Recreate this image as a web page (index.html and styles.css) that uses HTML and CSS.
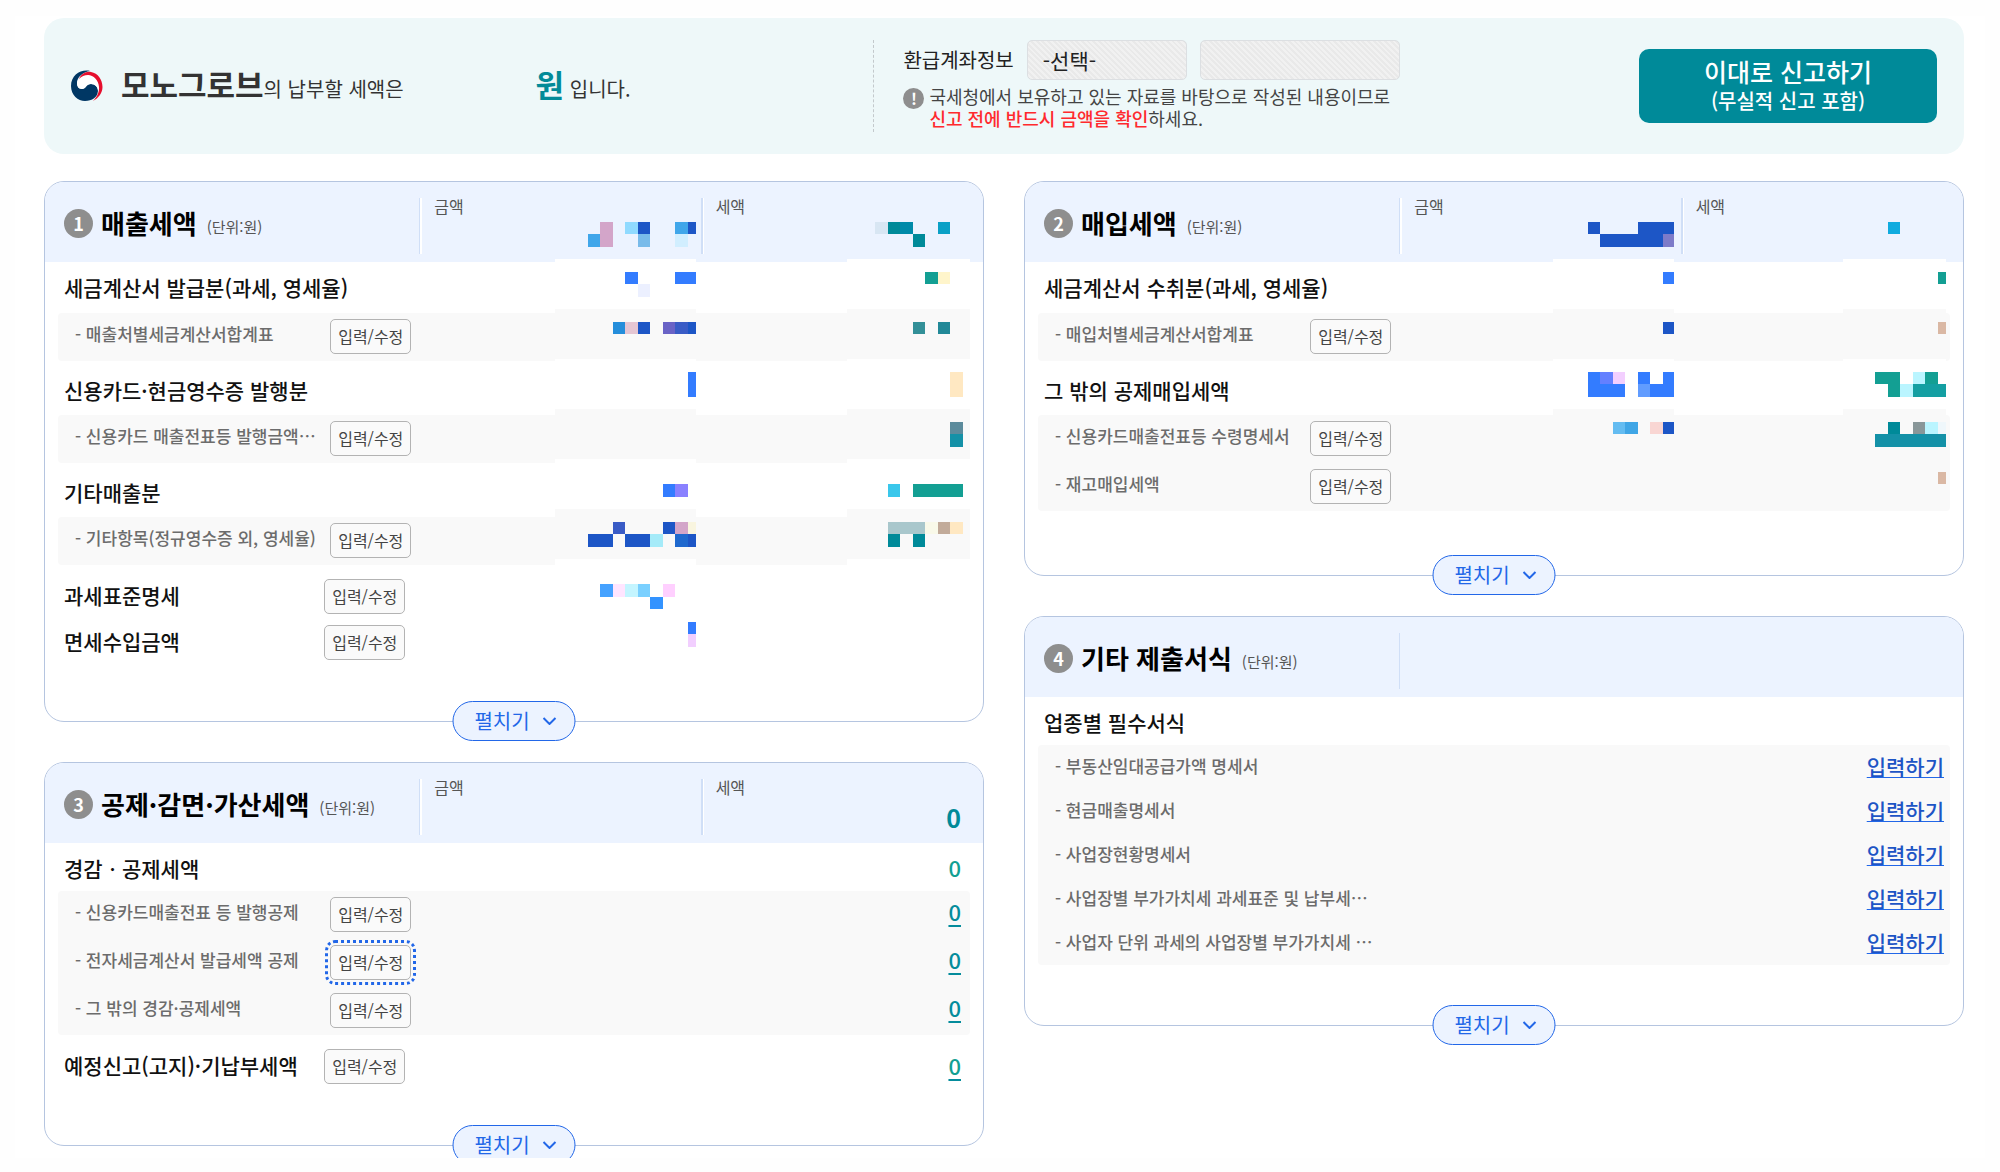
FILE: index.html
```html
<!DOCTYPE html>
<html lang="ko">
<head>
<meta charset="utf-8">
<meta name="viewport" content="width=device-width, initial-scale=1">
<title>부가가치세 신고</title>
<link rel="stylesheet" href="styles.css">
</head>
<body>
<main class="panel">
  <section class="banner">
    <div class="banner-sum">
      <svg class="logo" viewBox="0 0 32 32" aria-hidden="true">
        <path fill="#003764" d="M19 1C10-1 0 5 0 16c0 9 7 15 14 15 7 0 13-4 13-10 0-4-3-7-7-7-5 0-5 5-9 5-3.500 0-5-3-5-6C6 7 12 2 19 1z"/>
        <path fill="#fff" d="M8 9c2.500-3.500 6-4.500 9-4 6 .5 10.500 5 11 12 .3 3-.6 6-2 8 .7-1.300 1-2.600 1-4 0-4-3-7-7-7-5 0-5 5-9 5-3.500 0-5-3-5-6 0-1.500.8-2.800 2-4z"/>
        <path fill="#e60f2d" d="M8 9c2-5 7-8 12-7 7 1 11.500 8 11.500 15 0 6-4 11-9.500 14 4-4 6.500-9 6-14-.5-7-5.500-12-11-12-3.500 0-6.500 1.500-9 4z"/>
      </svg>
      <p class="sum-text"><strong class="corp">모노그로브</strong>의 납부할 세액은<span class="sum-amount"></span><strong class="won">원</strong> 입니다.</p>
    </div>
    <div class="refund">
      <div class="refund-row">
        <label for="bank">환급계좌정보</label>
        <select id="bank" class="field bank" disabled><option>-선택-</option></select>
        <input class="field account" type="text" aria-label="계좌번호" disabled>
      </div>
      <div class="notice">
        <span class="notice-icon">!</span>
        <p>국세청에서 보유하고 있는 자료를 바탕으로 작성된 내용이므로<br><em>신고 전에 반드시 금액을 확인</em>하세요.</p>
      </div>
    </div>
    <button class="submit" type="button"><span class="submit-main">이대로 신고하기</span><span class="submit-sub">(무실적 신고 포함)</span></button>
  </section>

  <div class="columns">
    <div class="column">
      <section class="card">
        <table>
          <thead>
            <tr>
              <th class="c-item"><div class="card-title"><span class="num">1</span><h2>매출세액</h2><span class="unit">(단위:원)</span></div></th>
              <th class="c-val split">금액
                <svg class="mosaic at-5" width="141" height="480" aria-hidden="true">
                  <path fill="#fff" d="M0 77h141v50H0zM0 177h141v50H0zM0 277h141v50H0zM0 377h141v10H0z"/>
                  <path fill="#f9f9f9" d="M0 127h141v50H0zM0 227h141v50H0zM0 327h141v50H0z"/>
                  <path fill="#40a6ea" d="M33 52h12v13H33zM120 40h13v12h-13z"/>
                  <path fill="#d3a5c9" d="M45 40h13v25H45zM120 340h13v12h-13z"/>
                  <path fill="#90daff" d="M70 40h13v12H70z"/>
                  <path fill="#79bbea" d="M83 52h12v13H83z"/>
                  <path fill="#d1eeff" d="M120 52h13v13h-13z"/>
                  <path fill="#1d56c6" d="M83 40h12v12H83zM133 40h8v12h-8zM83 140h12v12H83zM133 140h8v12h-8zM108 340h12v12h-12zM33 352h25v13H33zM70 352h25v13H70zM133 352h8v13h-8z"/>
                  <path fill="#337cff" d="M70 90h13v12H70zM120 90h21v12h-21zM133 190h8v25h-8zM108 302h12v13h-12zM133 440h8v12h-8z"/>
                  <path fill="#ecf0ff" d="M83 102h12v13H83z"/>
                  <path fill="#258edb" d="M58 140h12v12H58z"/>
                  <path fill="#e5c6d3" d="M70 140h13v12H70z"/>
                  <path fill="#6a63c6" d="M108 140h12v12h-12z"/>
                  <path fill="#3a5cc6" d="M120 140h13v12h-13zM58 340h12v12H58z"/>
                  <path fill="#8a81ff" d="M120 302h13v13h-13z"/>
                  <path fill="#f9f5df" d="M133 340h8v12h-8z"/>
                  <path fill="#a5ebf9" d="M95 352h13v13H95z"/>
                  <path fill="#1f69ce" d="M120 352h13v13h-13z"/>
                  <path fill="#45a2ff" d="M45 402h13v13H45z"/>
                  <path fill="#ffe5ff" d="M58 402h12v13H58z"/>
                  <path fill="#c4f5ff" d="M70 402h13v13H70z"/>
                  <path fill="#7ad0ff" d="M83 402h12v13H83z"/>
                  <path fill="#ffd0ff" d="M108 402h12v13h-12z"/>
                  <path fill="#3393ff" d="M95 415h13v12H95z"/>
                  <path fill="#f2cfff" d="M133 452h8v13h-8z"/>
                </svg>
              </th>
              <th class="c-val split wide">세액
                <svg class="mosaic at-13" width="123" height="387" aria-hidden="true">
                  <path fill="#fff" d="M0 77h123v50H0zM0 177h123v50H0zM0 277h123v50H0zM0 377h123v10H0z"/>
                  <path fill="#f9f9f9" d="M0 127h123v50H0zM0 227h123v50H0zM0 327h123v50H0z"/>
                  <path fill="#d8e6f3" d="M28 40h13v12H28z"/>
                  <path fill="#008a99" d="M41 40h12v12H41zM66 52h12v13H66zM41 352h12v13H41zM66 352h12v13H66z"/>
                  <path fill="#008aa9" d="M53 40h13v12H53z"/>
                  <path fill="#0aa0c6" d="M91 40h12v12H91z"/>
                  <path fill="#139f93" d="M78 90h13v12H78zM66 302h50v13H66z"/>
                  <path fill="#fff5cb" d="M91 90h12v12H91z"/>
                  <path fill="#339098" d="M66 140h12v12H66z"/>
                  <path fill="#228998" d="M91 140h12v12H91z"/>
                  <path fill="#ffe8c2" d="M103 190h13v25h-13zM103 340h13v12h-13z"/>
                  <path fill="#5c8b9c" d="M103 240h13v12h-13z"/>
                  <path fill="#1491a7" d="M103 252h13v13h-13z"/>
                  <path fill="#3ac7eb" d="M41 302h12v13H41z"/>
                  <path fill="#a9c7cc" d="M41 340h37v12H41z"/>
                  <path fill="#f9f9e9" d="M78 340h13v12H78z"/>
                  <path fill="#c2ab9a" d="M91 340h12v12H91z"/>
                </svg>
              </th>
            </tr>
          </thead>
          <tbody>
            <tr class="group tall"><td colspan="3">세금계산서 발급분(과세, 영세율)</td></tr>
            <tr class="sub only"><td><div class="line"><span class="name">- 매출처별세금계산서합계표</span><button class="edit" type="button">입력/수정</button></div></td><td></td><td></td></tr>
            <tr class="group next"><td colspan="3">신용카드·현금영수증 발행분</td></tr>
            <tr class="sub only"><td><div class="line"><span class="name">- 신용카드 매출전표등 발행금액⋯</span><button class="edit" type="button">입력/수정</button></div></td><td></td><td></td></tr>
            <tr class="group next"><td colspan="3">기타매출분</td></tr>
            <tr class="sub only"><td><div class="line"><span class="name">- 기타항목(정규영수증 외, 영세율)</span><button class="edit" type="button">입력/수정</button></div></td><td></td><td></td></tr>
            <tr class="group action after"><td><div class="line"><span class="name">과세표준명세</span><button class="edit" type="button">입력/수정</button></div></td><td></td><td></td></tr>
            <tr class="group action"><td><div class="line"><span class="name">면세수입금액</span><button class="edit" type="button">입력/수정</button></div></td><td></td><td></td></tr>
          </tbody>
        </table>
        <button class="expand" type="button">펼치기<svg viewBox="0 0 14 8" aria-hidden="true"><path d="M1 1l6 6 6-6"/></svg></button>
      </section>

      <section class="card">
        <table>
          <thead>
            <tr>
              <th class="c-item"><div class="card-title"><span class="num">3</span><h2>공제·감면·가산세액</h2><span class="unit">(단위:원)</span></div></th>
              <th class="c-val split">금액</th>
              <th class="c-val split wide">세액<span class="total">0</span></th>
            </tr>
          </thead>
          <tbody>
            <tr class="group"><td>경감ㆍ공제세액</td><td></td><td class="tax">0</td></tr>
            <tr class="sub first"><td><div class="line"><span class="name">- 신용카드매출전표 등 발행공제</span><button class="edit" type="button">입력/수정</button></div></td><td></td><td class="tax"><a href="#credit">0</a></td></tr>
            <tr class="sub"><td><div class="line"><span class="name">- 전자세금계산서 발급세액 공제</span><button class="edit focused" type="button">입력/수정</button></div></td><td></td><td class="tax"><a href="#einvoice">0</a></td></tr>
            <tr class="sub last"><td><div class="line"><span class="name">- 그 밖의 경감·공제세액</span><button class="edit" type="button">입력/수정</button></div></td><td></td><td class="tax"><a href="#other">0</a></td></tr>
            <tr class="group action after"><td><div class="line"><span class="name">예정신고(고지)·기납부세액</span><button class="edit" type="button">입력/수정</button></div></td><td></td><td class="tax"><a href="#prepaid">0</a></td></tr>
          </tbody>
        </table>
        <button class="expand" type="button">펼치기<svg viewBox="0 0 14 8" aria-hidden="true"><path d="M1 1l6 6 6-6"/></svg></button>
      </section>
    </div>

    <div class="column">
      <section class="card roomy">
        <table>
          <thead>
            <tr>
              <th class="c-item"><div class="card-title"><span class="num">2</span><h2>매입세액</h2><span class="unit">(단위:원)</span></div></th>
              <th class="c-val split">금액
                <svg class="mosaic at-7" width="121" height="277" aria-hidden="true">
                  <path fill="#fff" d="M0 77h121v50H0zM0 177h121v50H0z"/>
                  <path fill="#f9f9f9" d="M0 127h121v50H0zM0 227h121v50H0z"/>
                  <path fill="#1d56c6" d="M35 40h12v12H35zM85 40h36v12H85zM47 52h63v13H47zM110 140h11v12h-11zM110 240h11v12h-11z"/>
                  <path fill="#7d7bc9" d="M110 52h11v13h-11z"/>
                  <path fill="#337cff" d="M110 90h11v12h-11zM35 190h12v12H35zM35 202h37v13H35zM85 190h12v12H85zM110 190h11v12h-11zM97 202h24v13H97z"/>
                  <path fill="#6480ff" d="M47 190h13v12H47z"/>
                  <path fill="#f3cfff" d="M60 190h12v12H60z"/>
                  <path fill="#619cff" d="M85 202h12v13H85z"/>
                  <path fill="#64bcf1" d="M60 240h12v12H60z"/>
                  <path fill="#40a6e6" d="M72 240h13v12H72z"/>
                  <path fill="#f9d6d3" d="M97 240h13v12H97z"/>
                </svg>
              </th>
              <th class="c-val split wide">세액
                <svg class="mosaic at-17" width="103" height="302" aria-hidden="true">
                  <path fill="#fff" d="M0 77h103v50H0zM0 177h103v50H0z"/>
                  <path fill="#f9f9f9" d="M0 127h103v50H0zM0 227h103v50H0z"/>
                  <path fill="#10abdf" d="M45 40h12v12H45z"/>
                  <path fill="#139f93" d="M95 90h8v12h-8zM32 190h25v12H32zM45 202h12v13H45zM82 190h13v12H82z"/>
                  <path fill="#dab8a4" d="M95 140h8v12h-8zM95 290h8v12h-8z"/>
                  <path fill="#baf5ff" d="M70 190h12v12H70zM57 202h13v13H57zM82 240h13v12H82z"/>
                  <path fill="#149fa2" d="M70 202h33v13H70z"/>
                  <path fill="#008a99" d="M45 240h12v12H45z"/>
                  <path fill="#899799" d="M70 240h12v12H70z"/>
                  <path fill="#eff7fb" d="M95 240h8v12h-8z"/>
                  <path fill="#1491a7" d="M32 252h71v13H32z"/>
                </svg>
              </th>
            </tr>
          </thead>
          <tbody>
            <tr class="group tall"><td colspan="3">세금계산서 수취분(과세, 영세율)</td></tr>
            <tr class="sub only"><td><div class="line"><span class="name">- 매입처별세금계산서합계표</span><button class="edit" type="button">입력/수정</button></div></td><td></td><td></td></tr>
            <tr class="group next"><td colspan="3">그 밖의 공제매입세액</td></tr>
            <tr class="sub first"><td><div class="line"><span class="name">- 신용카드매출전표등 수령명세서</span><button class="edit" type="button">입력/수정</button></div></td><td></td><td></td></tr>
            <tr class="sub last"><td><div class="line"><span class="name">- 재고매입세액</span><button class="edit" type="button">입력/수정</button></div></td><td></td><td></td></tr>
          </tbody>
        </table>
        <button class="expand" type="button">펼치기<svg viewBox="0 0 14 8" aria-hidden="true"><path d="M1 1l6 6 6-6"/></svg></button>
      </section>

      <section class="card list">
        <table>
          <thead>
            <tr>
              <th class="c-item"><div class="card-title"><span class="num">4</span><h2>기타 제출서식</h2><span class="unit">(단위:원)</span></div></th>
              <th class="c-val split plain"></th>
              <th class="c-val"></th>
            </tr>
          </thead>
          <tbody class="forms">
            <tr class="group"><td colspan="3">업종별 필수서식</td></tr>
            <tr class="sub first"><td colspan="2">- 부동산임대공급가액 명세서</td><td class="go"><a href="#form1">입력하기</a></td></tr>
            <tr class="sub"><td colspan="2">- 현금매출명세서</td><td class="go"><a href="#form2">입력하기</a></td></tr>
            <tr class="sub"><td colspan="2">- 사업장현황명세서</td><td class="go"><a href="#form3">입력하기</a></td></tr>
            <tr class="sub"><td colspan="2">- 사업장별 부가가치세 과세표준 및 납부세⋯</td><td class="go"><a href="#form4">입력하기</a></td></tr>
            <tr class="sub last"><td colspan="2">- 사업자 단위 과세의 사업장별 부가가치세 ⋯</td><td class="go"><a href="#form5">입력하기</a></td></tr>
          </tbody>
        </table>
        <button class="expand" type="button">펼치기<svg viewBox="0 0 14 8" aria-hidden="true"><path d="M1 1l6 6 6-6"/></svg></button>
      </section>
    </div>
  </div>
</main>
</body>
</html>
```
FILE: styles.css
```css
*,
*::before,
*::after {
  box-sizing: border-box;
}

body {
  margin: 16px 15px 14px;
  background: #fefefe;
  color: #333;
  font-family: "Noto Sans CJK KR", "Noto Sans", sans-serif;
  font-size: 16px;
}

button,
input,
select {
  font-family: inherit;
}

p,
h2 {
  margin: 0;
}

.panel {
  overflow: hidden;
  padding: 2px 21px 12px 29px;
  background: #fff;
  box-shadow: 0 1px 3px rgba(0, 0, 0, 0.24), 0 2px 12px rgba(0, 0, 0, 0.12);
}

/* Summary banner */
.banner {
  display: flex;
  align-items: center;
  height: 136px;
  padding: 0 27px;
  border-radius: 20px;
  background: #eef8f9;
}

.banner-sum {
  display: flex;
  flex: 0 0 43%;
  align-items: center;
  gap: 18px;
}

.logo {
  width: 32px;
  height: 32px;
}

.sum-text {
  font-size: 20px;
  line-height: 44px;
  white-space: nowrap;
}

.corp,
.won {
  font-size: 31px;
  font-weight: 700;
}

.won {
  color: #038b98;
}

.sum-amount {
  display: inline-block;
  width: 132px;
}

.refund {
  display: flex;
  flex: 1;
  flex-direction: column;
  gap: 5px;
  height: 92px;
  padding-left: 29px;
  border-left: 1px dashed #c3c9cc;
}

.refund-row {
  display: flex;
  align-items: center;
  gap: 13px;
  color: #222;
  font-size: 20px;
}

.refund-row label {
  line-height: 38px;
}

.field {
  height: 40px;
  padding: 0 15px;
  appearance: none;
  border: 1px solid #dcdfe2;
  border-radius: 5px;
  background: repeating-linear-gradient(45deg, #e9e9e9 0 2px, #f1f1f1 2px 4px);
  color: #222;
  font-size: 21px;
  opacity: 1;
}

.bank {
  width: 160px;
}

.account {
  width: 200px;
}

.notice {
  display: flex;
  gap: 5px;
  color: #444;
  font-size: 18px;
  line-height: 22px;
}

.notice-icon {
  flex: none;
  width: 21px;
  height: 21px;
  margin-top: 3px;
  border-radius: 50%;
  background: #8e8e8e;
  color: #fff;
  font-size: 16px;
  font-weight: 700;
  line-height: 20px;
  text-align: center;
}

.notice em {
  color: #ff2a2e;
  font-style: normal;
  font-weight: 500;
}

.submit {
  display: flex;
  flex-direction: column;
  align-items: center;
  justify-content: center;
  width: 298px;
  height: 74px;
  border: 0;
  border-radius: 10px;
  background: #008a99;
  color: #fff;
  font-weight: 500;
  line-height: 29px;
}

.submit-main {
  font-size: 25px;
}

.submit-sub {
  font-size: 20px;
}

/* Cards */
.columns {
  display: grid;
  grid-template-columns: 1fr 1fr;
  gap: 40px;
  margin-top: 27px;
}

.column {
  display: flex;
  flex-direction: column;
  gap: 40px;
}

.card {
  position: relative;
  padding-bottom: 56px;
  border: 1px solid #b5c5e0;
  border-radius: 20px;
}

.card.list {
  padding-bottom: 60px;
}

.card.roomy {
  padding-bottom: 64px;
}

table {
  width: 100%;
  border-spacing: 0;
  table-layout: fixed;
}

th,
td {
  padding: 0;
  font-weight: 500;
  text-align: left;
  vertical-align: top;
}

th {
  position: relative;
  height: 80px;
  background-color: #ecf3ff;
}

th:first-child {
  border-top-left-radius: 19px;
}

th:last-child {
  border-top-right-radius: 19px;
}

.c-item {
  width: 39.9%;
}

.c-val {
  padding: 13px 0 0 15px;
  color: #555;
  font-size: 16px;
  font-weight: 400;
  line-height: 22px;
}

.split {
  width: 30%;
  background-image: linear-gradient(to right, #d0dff7 1px, #fff 1px 3px, transparent 3px);
  background-position: 0 16px;
  background-repeat: no-repeat;
  background-size: 3px 56px;
}

.split.wide {
  width: auto;
  background-image: linear-gradient(to right, #d0dff7 2px, #fff 2px 3px, transparent 3px);
}

.split.plain {
  background-size: 1px 56px;
}

.card-title {
  display: flex;
  align-items: center;
  padding: 21px 0 0 19px;
}

.num {
  width: 29px;
  margin-right: 8px;
  border-radius: 50%;
  background: #8e8e8e;
  color: #fff;
  font-size: 18px;
  font-weight: 700;
  line-height: 29px;
  text-align: center;
}

.card-title h2 {
  color: #000;
  font-size: 26px;
  font-weight: 700;
  line-height: 40px;
}

.unit {
  margin-left: 10px;
  padding-top: 8px;
  color: #555;
  font-size: 15px;
  font-weight: 400;
  line-height: 32px;
}

.total {
  position: absolute;
  right: 22px;
  bottom: 10px;
  color: #008a99;
  font-size: 25px;
  font-weight: 700;
  line-height: 32px;
}

/* Masked figures lie over the amount columns */
.mosaic {
  position: absolute;
  z-index: 1;
  top: 0;
  pointer-events: none;
}

.at-5 {
  right: 5px;
}

.at-7 {
  right: 7px;
}

.at-13 {
  right: 13px;
}

.at-17 {
  right: 17px;
}

.group td {
  height: 48px;
  padding-top: 4px;
  color: #111;
  font-size: 21px;
  line-height: 42px;
}

.group td:first-child {
  padding-left: 19px;
}

.group.tall td {
  height: 51px;
}

.group.next td {
  height: 54px;
  padding-top: 8px;
}

.group.action td {
  height: 46px;
  padding-top: 0;
  line-height: 44px;
}

.group.action.after td {
  height: 54px;
  padding-top: 8px;
}

.line {
  display: flex;
  align-items: flex-start;
}

.line .name {
  flex: 1;
  white-space: nowrap;
}

.edit {
  width: 81px;
  height: 35px;
  margin: 6px 8px 0 0;
  padding: 0;
  border: 1px solid #b3b3b3;
  border-radius: 5px;
  background: #fafafa;
  color: #444;
  font-size: 16px;
  font-weight: 400;
  line-height: 33px;
  text-align: center;
}

.action .edit {
  margin-right: 14px;
}

.edit.focused {
  outline: 3px dotted #2267e8;
  outline-offset: 2px;
}

.sub td {
  height: 48px;
  background: #f9f9f9;
  background-clip: padding-box;
  color: #6c6c6c;
  font-size: 17px;
  line-height: 42px;
}

.sub td:first-child {
  padding-left: 17px;
  border-left: 13px solid transparent;
}

.sub td:last-child {
  border-right: 13px solid transparent;
}

.first td:first-child,
.only td:first-child {
  border-top-left-radius: 17px 4px;
}

.first td:last-child,
.only td:last-child {
  border-top-right-radius: 17px 4px;
}

.last td:first-child,
.only td:first-child {
  border-bottom-left-radius: 17px 4px;
}

.last td:last-child,
.only td:last-child {
  border-bottom-right-radius: 17px 4px;
}

.forms .sub td {
  height: 44px;
}

.group .tax,
.sub .tax {
  padding-right: 22px;
  color: #139f93;
  font-size: 22px;
  line-height: 40px;
  text-align: right;
}

.sub .tax {
  padding-right: 9px;
}

.tax a {
  color: inherit;
  text-decoration: underline #058c9c 2px;
  text-underline-offset: 4px;
}

.sub .tax a {
  color: #058c9c;
}

.sub .go {
  padding-right: 6px;
  font-size: 21px;
  text-align: right;
}

.go a {
  color: #1d55c5;
  text-decoration: underline #2267e8 1px;
  text-underline-offset: 2px;
}

.expand {
  display: flex;
  position: absolute;
  z-index: 2;
  bottom: -20px;
  left: 50%;
  align-items: center;
  justify-content: center;
  gap: 13px;
  width: 123px;
  height: 40px;
  padding: 0 0 2px 3px;
  transform: translateX(-50%);
  border: 1px solid #2267e8;
  border-radius: 20px;
  background: #ecf3ff;
  color: #2267e8;
  font-size: 20px;
  font-weight: 400;
}

.expand svg {
  width: 14px;
  height: 8px;
  margin-top: 2px;
  fill: none;
  stroke: #2267e8;
  stroke-width: 2;
}
```
